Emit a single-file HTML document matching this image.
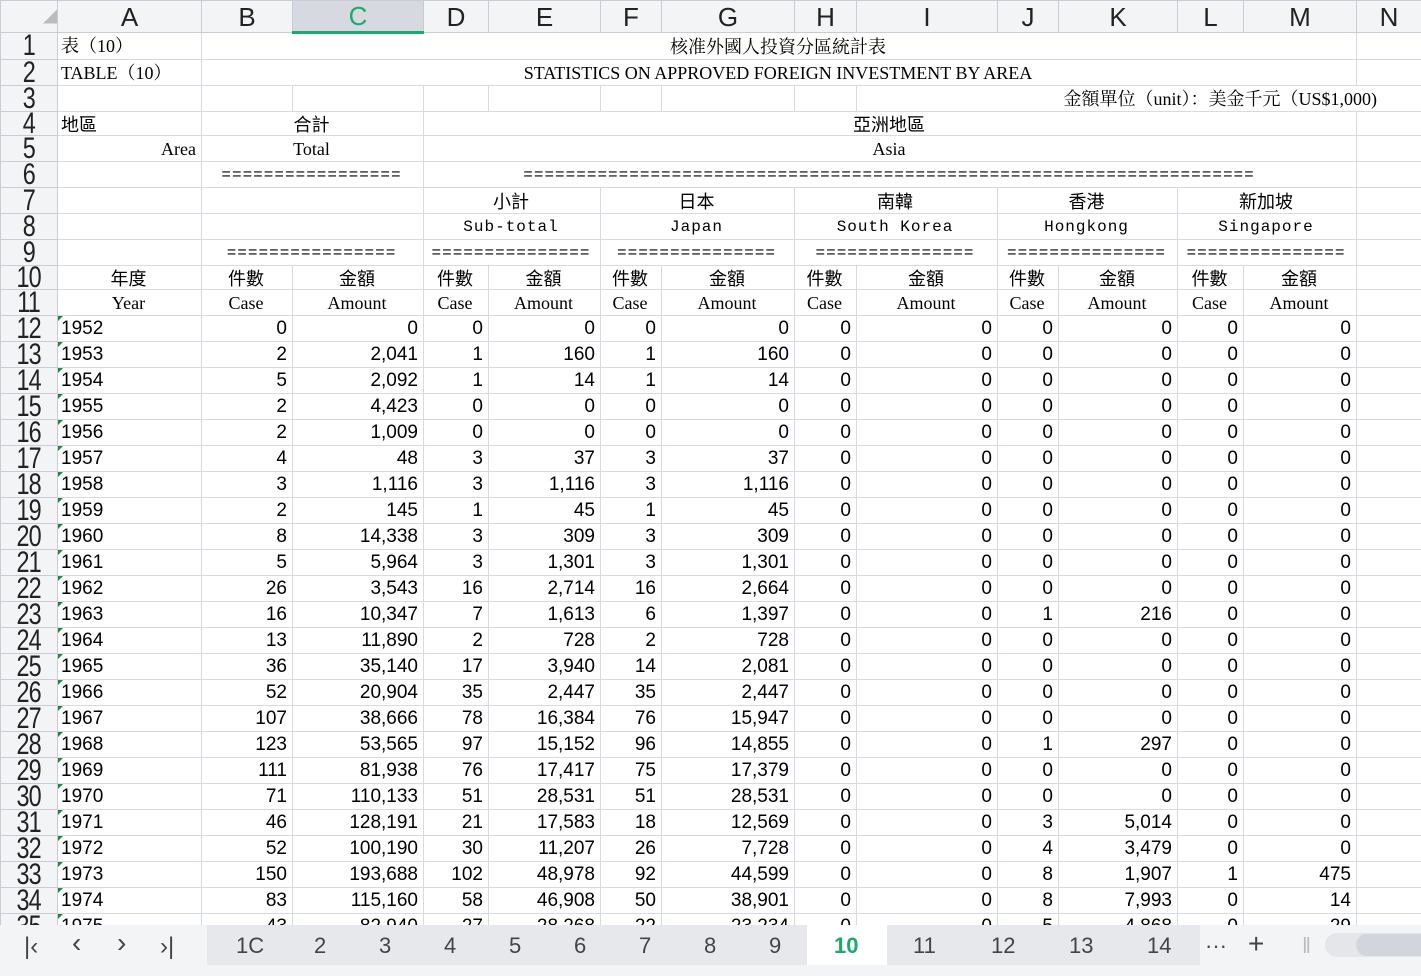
<!DOCTYPE html>
<html><head><meta charset="utf-8"><style>
html,body{margin:0;padding:0;width:1421px;height:976px;overflow:hidden;background:#fff;font-family:"Liberation Sans","Noto Sans CJK TC",sans-serif;}
#wrap{position:absolute;left:0;top:0;width:1421px;height:925px;overflow:hidden;}
table{border-collapse:collapse;table-layout:fixed;width:1421px;}
td{border:1px solid #d5dae3;padding:0 5px 0 3px;white-space:nowrap;overflow:hidden;font-size:19px;color:#000;height:25px;line-height:20px;}
td.h{background:#f3f4f6;color:#222;text-align:center;font-size:27px;border-color:#c7ccd6;padding:0;}
tr.ch td{height:30px;font-size:26px;}
td.rn span{display:inline-block;font-size:30px;letter-spacing:-1px;transform:scaleX(0.78);line-height:20px;}
.sel{background:#d6d9df !important;color:#1aaa6c !important;border-bottom:3px solid #1aaa6c !important;}
.s{font-family:"Liberation Serif","Noto Serif CJK SC",serif;font-size:18px;line-height:20px;}
.c{text-align:center}.r{text-align:right}
.m{font-family:"Liberation Mono","Noto Sans CJK TC",monospace;font-size:16px;letter-spacing:1px;line-height:18px;}
.k{font-family:"Noto Sans CJK TC",sans-serif;font-size:18px;line-height:20px;}
.y{position:relative}
.y:before{content:"";position:absolute;left:0;top:0;border-top:5px solid #1a8a3a;border-right:5px solid transparent;}
#tabs{position:absolute;left:0;top:925px;width:1421px;height:40px;background:#f3f4f6;}
#tabs .bar{position:absolute;left:207px;top:0;width:993px;height:40px;background:#e6e8ec;}
#tabs span{position:absolute;top:8px;font-size:22px;color:#444;}
#bottom{position:absolute;left:0;top:965px;width:1421px;height:11px;background:#f3f4f6;}
tr.t td{height:23px;}
</style></head><body>
<div id="wrap"><table>
<colgroup><col style="width:57px"><col style="width:144px"><col style="width:91px"><col style="width:131px"><col style="width:65px"><col style="width:112px"><col style="width:61px"><col style="width:133px"><col style="width:62px"><col style="width:141px"><col style="width:61px"><col style="width:119px"><col style="width:66px"><col style="width:113px"><col style="width:65px"></colgroup>
<tr class="ch"><td class="h" style="font-size:14px;color:#bbb;text-align:right">◢</td><td class="h">A</td><td class="h">B</td><td class="h sel">C</td><td class="h">D</td><td class="h">E</td><td class="h">F</td><td class="h">G</td><td class="h">H</td><td class="h">I</td><td class="h">J</td><td class="h">K</td><td class="h">L</td><td class="h">M</td><td class="h">N</td></tr>
<tr><td class="h rn"><span>1</span></td><td class="s">表（10）</td><td colspan="12" class="s c">核准外國人投資分區統計表</td><td></td></tr>
<tr><td class="h rn"><span>2</span></td><td class="s">TABLE（10）</td><td colspan="12" class="s c">STATISTICS ON APPROVED FOREIGN INVESTMENT BY AREA</td><td></td></tr>
<tr><td class="h rn"><span>3</span></td><td></td><td></td><td></td><td></td><td></td><td></td><td></td><td></td><td colspan="6" class="s r" style="padding-right:44px">金額單位（unit）：美金千元（US$1,000)</td></tr>
<tr class="t"><td class="h rn" style="height:21px"><span>4</span></td><td class="k">地區</td><td colspan="2" class="k c">合計</td><td colspan="10" class="k c">亞洲地區</td><td></td></tr>
<tr><td class="h rn"><span>5</span></td><td class="s r">Area</td><td colspan="2" class="s c">Total</td><td colspan="10" class="s c">Asia</td><td></td></tr>
<tr><td class="h rn"><span>6</span></td><td></td><td colspan="2" class="m c">=================</td><td colspan="10" class="m c">=====================================================================</td><td></td></tr>
<tr><td class="h rn"><span>7</span></td><td></td><td colspan="2"></td><td colspan="2" class="k c">小計</td><td colspan="2" class="k c">日本</td><td colspan="2" class="k c">南韓</td><td colspan="2" class="k c">香港</td><td colspan="2" class="k c">新加坡</td><td></td></tr>
<tr><td class="h rn"><span>8</span></td><td></td><td colspan="2"></td><td colspan="2" class="m c">Sub-total</td><td colspan="2" class="m c">Japan</td><td colspan="2" class="m c">South Korea</td><td colspan="2" class="m c">Hongkong</td><td colspan="2" class="m c">Singapore</td><td></td></tr>
<tr><td class="h rn"><span>9</span></td><td></td><td colspan="2" class="m c">================</td><td colspan="2" class="m c">===============</td><td colspan="2" class="m c">===============</td><td colspan="2" class="m c">===============</td><td colspan="2" class="m c">===============</td><td colspan="2" class="m c">===============</td><td></td></tr>
<tr class="t"><td class="h rn" style="height:21px"><span>10</span></td><td class="k c">年度</td><td class="k c">件數</td><td class="k c">金額</td><td class="k c">件數</td><td class="k c">金額</td><td class="k c">件數</td><td class="k c">金額</td><td class="k c">件數</td><td class="k c">金額</td><td class="k c">件數</td><td class="k c">金額</td><td class="k c">件數</td><td class="k c">金額</td><td></td></tr>
<tr><td class="h rn"><span>11</span></td><td class="s c">Year</td><td class="s c">Case</td><td class="s c">Amount</td><td class="s c">Case</td><td class="s c">Amount</td><td class="s c">Case</td><td class="s c">Amount</td><td class="s c">Case</td><td class="s c">Amount</td><td class="s c">Case</td><td class="s c">Amount</td><td class="s c">Case</td><td class="s c">Amount</td><td></td></tr>
<tr><td class="h rn"><span>12</span></td><td class="y">1952</td><td class="r">0</td><td class="r">0</td><td class="r">0</td><td class="r">0</td><td class="r">0</td><td class="r">0</td><td class="r">0</td><td class="r">0</td><td class="r">0</td><td class="r">0</td><td class="r">0</td><td class="r">0</td><td></td></tr>
<tr><td class="h rn"><span>13</span></td><td class="y">1953</td><td class="r">2</td><td class="r">2,041</td><td class="r">1</td><td class="r">160</td><td class="r">1</td><td class="r">160</td><td class="r">0</td><td class="r">0</td><td class="r">0</td><td class="r">0</td><td class="r">0</td><td class="r">0</td><td></td></tr>
<tr><td class="h rn"><span>14</span></td><td class="y">1954</td><td class="r">5</td><td class="r">2,092</td><td class="r">1</td><td class="r">14</td><td class="r">1</td><td class="r">14</td><td class="r">0</td><td class="r">0</td><td class="r">0</td><td class="r">0</td><td class="r">0</td><td class="r">0</td><td></td></tr>
<tr><td class="h rn"><span>15</span></td><td class="y">1955</td><td class="r">2</td><td class="r">4,423</td><td class="r">0</td><td class="r">0</td><td class="r">0</td><td class="r">0</td><td class="r">0</td><td class="r">0</td><td class="r">0</td><td class="r">0</td><td class="r">0</td><td class="r">0</td><td></td></tr>
<tr><td class="h rn"><span>16</span></td><td class="y">1956</td><td class="r">2</td><td class="r">1,009</td><td class="r">0</td><td class="r">0</td><td class="r">0</td><td class="r">0</td><td class="r">0</td><td class="r">0</td><td class="r">0</td><td class="r">0</td><td class="r">0</td><td class="r">0</td><td></td></tr>
<tr><td class="h rn"><span>17</span></td><td class="y">1957</td><td class="r">4</td><td class="r">48</td><td class="r">3</td><td class="r">37</td><td class="r">3</td><td class="r">37</td><td class="r">0</td><td class="r">0</td><td class="r">0</td><td class="r">0</td><td class="r">0</td><td class="r">0</td><td></td></tr>
<tr><td class="h rn"><span>18</span></td><td class="y">1958</td><td class="r">3</td><td class="r">1,116</td><td class="r">3</td><td class="r">1,116</td><td class="r">3</td><td class="r">1,116</td><td class="r">0</td><td class="r">0</td><td class="r">0</td><td class="r">0</td><td class="r">0</td><td class="r">0</td><td></td></tr>
<tr><td class="h rn"><span>19</span></td><td class="y">1959</td><td class="r">2</td><td class="r">145</td><td class="r">1</td><td class="r">45</td><td class="r">1</td><td class="r">45</td><td class="r">0</td><td class="r">0</td><td class="r">0</td><td class="r">0</td><td class="r">0</td><td class="r">0</td><td></td></tr>
<tr><td class="h rn"><span>20</span></td><td class="y">1960</td><td class="r">8</td><td class="r">14,338</td><td class="r">3</td><td class="r">309</td><td class="r">3</td><td class="r">309</td><td class="r">0</td><td class="r">0</td><td class="r">0</td><td class="r">0</td><td class="r">0</td><td class="r">0</td><td></td></tr>
<tr><td class="h rn"><span>21</span></td><td class="y">1961</td><td class="r">5</td><td class="r">5,964</td><td class="r">3</td><td class="r">1,301</td><td class="r">3</td><td class="r">1,301</td><td class="r">0</td><td class="r">0</td><td class="r">0</td><td class="r">0</td><td class="r">0</td><td class="r">0</td><td></td></tr>
<tr><td class="h rn"><span>22</span></td><td class="y">1962</td><td class="r">26</td><td class="r">3,543</td><td class="r">16</td><td class="r">2,714</td><td class="r">16</td><td class="r">2,664</td><td class="r">0</td><td class="r">0</td><td class="r">0</td><td class="r">0</td><td class="r">0</td><td class="r">0</td><td></td></tr>
<tr><td class="h rn"><span>23</span></td><td class="y">1963</td><td class="r">16</td><td class="r">10,347</td><td class="r">7</td><td class="r">1,613</td><td class="r">6</td><td class="r">1,397</td><td class="r">0</td><td class="r">0</td><td class="r">1</td><td class="r">216</td><td class="r">0</td><td class="r">0</td><td></td></tr>
<tr><td class="h rn"><span>24</span></td><td class="y">1964</td><td class="r">13</td><td class="r">11,890</td><td class="r">2</td><td class="r">728</td><td class="r">2</td><td class="r">728</td><td class="r">0</td><td class="r">0</td><td class="r">0</td><td class="r">0</td><td class="r">0</td><td class="r">0</td><td></td></tr>
<tr><td class="h rn"><span>25</span></td><td class="y">1965</td><td class="r">36</td><td class="r">35,140</td><td class="r">17</td><td class="r">3,940</td><td class="r">14</td><td class="r">2,081</td><td class="r">0</td><td class="r">0</td><td class="r">0</td><td class="r">0</td><td class="r">0</td><td class="r">0</td><td></td></tr>
<tr><td class="h rn"><span>26</span></td><td class="y">1966</td><td class="r">52</td><td class="r">20,904</td><td class="r">35</td><td class="r">2,447</td><td class="r">35</td><td class="r">2,447</td><td class="r">0</td><td class="r">0</td><td class="r">0</td><td class="r">0</td><td class="r">0</td><td class="r">0</td><td></td></tr>
<tr><td class="h rn"><span>27</span></td><td class="y">1967</td><td class="r">107</td><td class="r">38,666</td><td class="r">78</td><td class="r">16,384</td><td class="r">76</td><td class="r">15,947</td><td class="r">0</td><td class="r">0</td><td class="r">0</td><td class="r">0</td><td class="r">0</td><td class="r">0</td><td></td></tr>
<tr><td class="h rn"><span>28</span></td><td class="y">1968</td><td class="r">123</td><td class="r">53,565</td><td class="r">97</td><td class="r">15,152</td><td class="r">96</td><td class="r">14,855</td><td class="r">0</td><td class="r">0</td><td class="r">1</td><td class="r">297</td><td class="r">0</td><td class="r">0</td><td></td></tr>
<tr><td class="h rn"><span>29</span></td><td class="y">1969</td><td class="r">111</td><td class="r">81,938</td><td class="r">76</td><td class="r">17,417</td><td class="r">75</td><td class="r">17,379</td><td class="r">0</td><td class="r">0</td><td class="r">0</td><td class="r">0</td><td class="r">0</td><td class="r">0</td><td></td></tr>
<tr><td class="h rn"><span>30</span></td><td class="y">1970</td><td class="r">71</td><td class="r">110,133</td><td class="r">51</td><td class="r">28,531</td><td class="r">51</td><td class="r">28,531</td><td class="r">0</td><td class="r">0</td><td class="r">0</td><td class="r">0</td><td class="r">0</td><td class="r">0</td><td></td></tr>
<tr><td class="h rn"><span>31</span></td><td class="y">1971</td><td class="r">46</td><td class="r">128,191</td><td class="r">21</td><td class="r">17,583</td><td class="r">18</td><td class="r">12,569</td><td class="r">0</td><td class="r">0</td><td class="r">3</td><td class="r">5,014</td><td class="r">0</td><td class="r">0</td><td></td></tr>
<tr><td class="h rn"><span>32</span></td><td class="y">1972</td><td class="r">52</td><td class="r">100,190</td><td class="r">30</td><td class="r">11,207</td><td class="r">26</td><td class="r">7,728</td><td class="r">0</td><td class="r">0</td><td class="r">4</td><td class="r">3,479</td><td class="r">0</td><td class="r">0</td><td></td></tr>
<tr><td class="h rn"><span>33</span></td><td class="y">1973</td><td class="r">150</td><td class="r">193,688</td><td class="r">102</td><td class="r">48,978</td><td class="r">92</td><td class="r">44,599</td><td class="r">0</td><td class="r">0</td><td class="r">8</td><td class="r">1,907</td><td class="r">1</td><td class="r">475</td><td></td></tr>
<tr><td class="h rn"><span>34</span></td><td class="y">1974</td><td class="r">83</td><td class="r">115,160</td><td class="r">58</td><td class="r">46,908</td><td class="r">50</td><td class="r">38,901</td><td class="r">0</td><td class="r">0</td><td class="r">8</td><td class="r">7,993</td><td class="r">0</td><td class="r">14</td><td></td></tr>
<tr><td class="h rn"><span>35</span></td><td class="y">1975</td><td class="r">43</td><td class="r">82,940</td><td class="r">27</td><td class="r">28,268</td><td class="r">22</td><td class="r">23,234</td><td class="r">0</td><td class="r">0</td><td class="r">5</td><td class="r">4,868</td><td class="r">0</td><td class="r">29</td><td></td></tr>
</table></div>
<div id="tabs"><div class="bar"></div>
<span style="left:24px;font-size:24px">|&lsaquo;</span><span style="left:72px;font-size:28px;top:2px">&lsaquo;</span><span style="left:117px;font-size:28px;top:2px">&rsaquo;</span><span style="left:160px;font-size:24px">&rsaquo;|</span>
<span style="left:236px">1C</span><span style="left:314px">2</span><span style="left:379px">3</span><span style="left:444px">4</span><span style="left:509px">5</span><span style="left:574px">6</span><span style="left:639px">7</span><span style="left:704px">8</span><span style="left:769px">9</span>
<div style="position:absolute;left:807px;top:0;width:80px;height:40px;background:#fff"></div>
<span style="left:834px;color:#1aaa6c;font-weight:bold">10</span><span style="left:913px">11</span><span style="left:991px">12</span><span style="left:1069px">13</span><span style="left:1147px">14</span>
<span style="left:1205px">···</span><span style="left:1248px;font-size:28px;top:3px">+</span><span style="left:1302px;color:#bbb">‖</span>
<div style="position:absolute;left:1325px;top:8px;width:96px;height:24px;background:#e4e6ea;border-radius:12px 0 0 12px"></div>
<div style="position:absolute;left:1356px;top:9px;width:65px;height:22px;background:#d2d5db;border-radius:11px 0 0 11px"></div>
</div>
<div id="bottom"></div>
</body></html>
